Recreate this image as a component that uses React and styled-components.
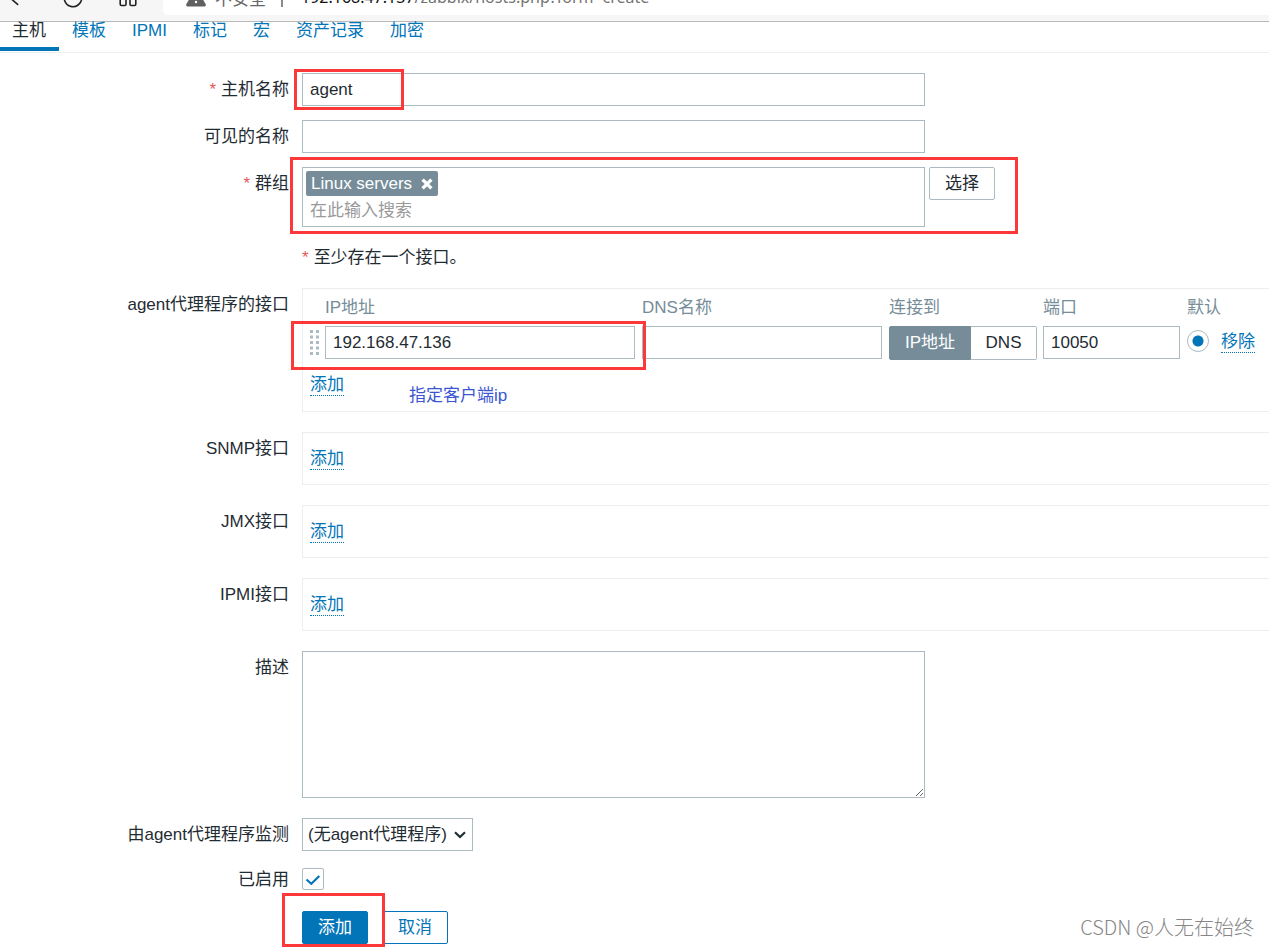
import React, { useState } from 'react';
import styled, { createGlobalStyle } from 'styled-components';

const TABS = ['主机', '模板', 'IPMI', '标记', '宏', '资产记录', '加密'];

const EMPTY_INTERFACES = ['SNMP接口', 'JMX接口', 'IPMI接口'];

function BrowserBar() {
  return (
    <Browser>
      <BrowserButtons>
        <BrowserIcon viewBox="0 0 22 20">
          <path d="M13.2 16.8 5.2 10l8-6.8" />
        </BrowserIcon>
        <BrowserIcon viewBox="0 0 22 20">
          <path d="M18 4.8A8.7 8.7 0 1 0 19.7 10M19 .6v5h-5" />
        </BrowserIcon>
        <BrowserIcon viewBox="0 0 22 20">
          <rect x="1.2" y="10.5" width="5.8" height="7" rx="1.2" />
          <rect x="11" y="10.5" width="5.8" height="7" rx="1.2" />
          <rect x="1.2" y="1" width="5.8" height="6" rx="1.2" />
          <rect x="11" y="1" width="5.8" height="6" rx="1.2" />
        </BrowserIcon>
      </BrowserButtons>
      <AddressBar>
        <WarningIcon viewBox="0 0 20 20">
          <path d="M8.7 2.5a1.5 1.5 0 0 1 2.6 0l8.4 14.8a1.5 1.5 0 0 1-1.3 2.2H1.6a1.5 1.5 0 0 1-1.3-2.2z" />
          <circle cx="10" cy="15" r="1.2" />
        </WarningIcon>
        <Insecure>不安全</Insecure>
        <Separator />
        <Url>
          <b>192.168.47.137</b>/zabbix/hosts.php?form=create
        </Url>
      </AddressBar>
    </Browser>
  );
}

function InterfaceTable() {
  const [target, setTarget] = useState('ip');
  return (
    <Table>
      <thead>
        <tr>
          <HeadCell />
          <HeadCell>IP地址</HeadCell>
          <HeadCell>DNS名称</HeadCell>
          <HeadCell>连接到</HeadCell>
          <HeadCell>端口</HeadCell>
          <HeadCell>默认</HeadCell>
          <HeadCell />
        </tr>
      </thead>
      <tbody>
        <tr>
          <Cell $width={22}>
            <DragHandle viewBox="0 0 9 25">
              {[0, 5.5, 11, 16.5, 22].map(y => (
                <path key={y} d={`M0 ${y}h3v3h-3zM6 ${y}h3v3h-3z`} />
              ))}
            </DragHandle>
          </Cell>
          <Cell $width={317} $space={7}>
            <Input aria-label="IP地址" defaultValue="192.168.47.136" />
          </Cell>
          <Cell $width={247} $space={7}>
            <Input aria-label="DNS名称" />
          </Cell>
          <Cell $width={154} $space={6}>
            <Segments>
              <Segment
                type="button"
                $active={target === 'ip'}
                onClick={() => setTarget('ip')}
              >
                IP地址
              </Segment>
              <Segment
                type="button"
                $active={target === 'dns'}
                onClick={() => setTarget('dns')}
              >
                DNS
              </Segment>
            </Segments>
          </Cell>
          <Cell $width={144} $space={7}>
            <Input aria-label="端口" defaultValue="10050" />
          </Cell>
          <Cell $width={34} $space={12}>
            <Radio type="radio" name="default" aria-label="默认" defaultChecked />
          </Cell>
          <Cell $width={34}>
            <ActionLink href="#remove">移除</ActionLink>
          </Cell>
        </tr>
      </tbody>
    </Table>
  );
}

function App() {
  return (
    <Page>
      <GlobalStyle />
      <BrowserBar />
      <Tabs>
        {TABS.map((tab, i) => (
          <Tab key={tab} href={`#tab${i}`} $active={i === 0}>
            {tab}
          </Tab>
        ))}
      </Tabs>
      <Form onSubmit={e => e.preventDefault()}>
        <Row>
          <Label htmlFor="host" $required>主机名称</Label>
          <Field>
            <Input id="host" defaultValue="agent" />
            <Highlight $left={-8} $top={-4} $width={110} $height={41} />
          </Field>
        </Row>
        <Row>
          <Label htmlFor="visible-name">可见的名称</Label>
          <Field>
            <Input id="visible-name" />
          </Field>
        </Row>
        <Row>
          <Label htmlFor="groups" $required>群组</Label>
          <GroupField>
            <MultiSelect>
              <Tag>
                Linux servers
                <TagRemove type="button" aria-label="删除">
                  <svg width="12" height="12" viewBox="0 0 12 12">
                    <path d="M1.6 1.6l8.8 8.8M10.4 1.6l-8.8 8.8" />
                  </svg>
                </TagRemove>
              </Tag>
              <SearchInput id="groups" placeholder="在此输入搜索" />
            </MultiSelect>
            <Button type="button" $kind="grey">选择</Button>
            <Highlight $left={-12} $top={-10} $width={728} $height={77} />
          </GroupField>
        </Row>
        <Row>
          <Label as="span" />
          <Note>至少存在一个接口。</Note>
        </Row>
        <Row $gap={20}>
          <Label as="span">agent代理程序的接口</Label>
          <Frame>
            <InterfaceTable />
            <FrameFooter>
              <ActionLink href="#add-agent">添加</ActionLink>
            </FrameFooter>
            <Highlight $left={-12} $top={32} $width={355} $height={49} />
            <HandNote>指定客户端ip</HandNote>
          </Frame>
        </Row>
        {EMPTY_INTERFACES.map(name => (
          <Row key={name} $gap={20}>
            <Label as="span">{name}</Label>
            <EmptyFrame>
              <ActionLink href={`#add-${name}`}>添加</ActionLink>
            </EmptyFrame>
          </Row>
        ))}
        <Row $gap={20}>
          <Label htmlFor="description">描述</Label>
          <Field>
            <TextArea id="description" />
          </Field>
        </Row>
        <Row $gap={12}>
          <Label htmlFor="proxy">由agent代理程序监测</Label>
          <SelectBox>
            <Select id="proxy">
              <option>(无agent代理程序)</option>
            </Select>
            <Chevron viewBox="0 0 12 8">
              <path d="M1 1.3l5 4.7 5-4.7" />
            </Chevron>
          </SelectBox>
        </Row>
        <Row $gap={15}>
          <Label htmlFor="enabled">已启用</Label>
          <CheckBox>
            <input id="enabled" type="checkbox" defaultChecked />
            <svg width="22" height="22" viewBox="0 0 22 22">
              <path d="M4.5 11.5l4.8 4.3 8-7.8" />
            </svg>
          </CheckBox>
        </Row>
        <Row $gap={0}>
          <Label as="span" />
          <Buttons>
            <Button type="submit" $kind="primary">添加</Button>
            <Button type="button" $kind="outline">取消</Button>
            <Highlight $left={-20} $top={-18} $width={103} $height={54} />
          </Buttons>
        </Row>
      </Form>
      <Watermark>CSDN @人无在始终</Watermark>
    </Page>
  );
}

const GlobalStyle = createGlobalStyle`
  *,
  *::before,
  *::after {
    box-sizing: border-box;
  }

  body {
    margin: 0;
    background: #fff;
  }

  body,
  input,
  button,
  select,
  textarea {
    color: #1f2c33;
    font-family: 'Liberation Sans', 'Noto Sans CJK SC', sans-serif;
    font-size: 17px;
  }
`;

const Page = styled.div`
  position: relative;
  min-height: 100vh;
  overflow: hidden;
`;

const Browser = styled.div`
  display: flex;
  align-items: flex-end;
  height: 22px;
  overflow: hidden;
  background: #f6f6f6;
  border-bottom: 1px solid #b9b9b9;
`;

const BrowserButtons = styled.div`
  display: flex;
  flex: none;
  align-items: center;
  gap: 35px;
  height: 34px;
  margin-bottom: 6px;
  padding: 0 22px 0 5px;
`;

const BrowserIcon = styled.svg`
  width: 22px;
  height: 20px;
  fill: none;
  stroke: #222;
  stroke-width: 1.6;
`;

const AddressBar = styled.div`
  display: flex;
  flex: 1;
  align-items: center;
  height: 36px;
  margin-bottom: 6px;
  padding-left: 23px;
  background: #fff;
  border-radius: 5px 0 0 5px;
  white-space: nowrap;
`;

const WarningIcon = styled.svg`
  width: 20px;
  height: 20px;
  fill: #606060;

  circle {
    fill: #fff;
  }
`;

const Insecure = styled.span`
  margin-left: 9px;
  color: #666;
`;

const Separator = styled.span`
  width: 2px;
  height: 20px;
  margin: 0 18px 0 15px;
  background: #8a8a8a;
`;

const Url = styled.span`
  color: #737373;
  font-family: 'Noto Sans', sans-serif;
  font-size: 16px;

  b {
    color: #111;
    font-weight: 400;
  }
`;

const Tabs = styled.nav`
  display: flex;
  height: 31px;
  border-bottom: 1px solid #ebeef0;
`;

const Tab = styled.a`
  height: 29px;
  padding: 0 13px;
  border-bottom: 4px solid ${props => (props.$active ? '#0275b8' : 'transparent')};
  color: ${props => (props.$active ? '#1f2c33' : '#0275b8')};
  line-height: 18px;
  text-decoration: none;

  &:first-child {
    padding-left: 12px;
  }
`;

const Form = styled.form`
  padding-top: 20px;
`;

const Row = styled.div`
  display: grid;
  grid-template-columns: 289px minmax(0, 1fr);
  column-gap: 13px;
  align-items: start;
  margin-bottom: ${props => (props.$gap === undefined ? 14 : props.$gap)}px;
`;

const Label = styled.label`
  line-height: 33px;
  text-align: right;

  &::before {
    content: ${props => (props.$required ? "'*'" : 'none')};
    margin-right: 5px;
    color: #e45959;
  }
`;

const Field = styled.div`
  position: relative;
  display: flex;
  max-width: 623px;
`;

const GroupField = styled.div`
  position: relative;
  display: flex;
  align-items: flex-start;
  gap: 4px;
  max-width: 693px;
`;

const Input = styled.input`
  display: block;
  width: 100%;
  height: 33px;
  padding: 0 7px;
  background: #fff;
  border: 1px solid #acbbc2;
  outline: none;
`;

const MultiSelect = styled.div`
  flex: 1;
  height: 60px;
  padding: 3px;
  border: 1px solid #acbbc2;
`;

const Tag = styled.span`
  display: flex;
  align-items: center;
  gap: 9px;
  width: max-content;
  height: 25px;
  padding: 0 5px;
  background: #768d99;
  border-radius: 2px;
  color: #fff;
`;

const TagRemove = styled.button`
  display: flex;
  padding: 0;
  background: none;
  border: 0;

  svg {
    fill: none;
    stroke: #fff;
    stroke-width: 3.4;
  }
`;

const SearchInput = styled.input`
  display: block;
  width: 100%;
  height: 30px;
  padding: 0 4px;
  background: none;
  border: 0;
  outline: none;

  &::placeholder {
    color: #999;
  }
`;

const buttonKinds = {
  grey: { border: '#acbbc2', background: '#fff', color: '#1f2c33' },
  primary: { border: '#0275b8', background: '#0275b8', color: '#fff' },
  outline: { border: '#0275b8', background: '#fff', color: '#0275b8' },
};

const Button = styled.button`
  flex: none;
  height: 33px;
  padding: 0 15px;
  background: ${props => buttonKinds[props.$kind].background};
  border: 1px solid ${props => buttonKinds[props.$kind].border};
  border-radius: 2px;
  color: ${props => buttonKinds[props.$kind].color};
  line-height: 20px;
`;

const Buttons = styled.div`
  position: relative;
  display: flex;
  gap: 14px;
`;

const Note = styled.div`
  line-height: 33px;

  &::before {
    content: '*';
    margin-right: 5px;
    color: #e45959;
  }
`;

const Frame = styled.div`
  position: relative;
  border: 1px solid #ebeef0;
  border-right: 0;
`;

const FrameFooter = styled.div`
  display: flex;
  padding: 14px 7px 15px;
`;

const EmptyFrame = styled.div`
  display: flex;
  padding: 15px 7px 14px;
  border: 1px solid #ebeef0;
  border-right: 0;
`;

const Table = styled.table`
  border-collapse: collapse;
`;

const HeadCell = styled.th`
  height: 37px;
  padding: 0;
  color: #768d99;
  font-weight: 400;
  line-height: 20px;
  text-align: left;
`;

const Cell = styled.td`
  width: ${props => props.$width}px;
  min-width: ${props => props.$width}px;
  height: 34px;
  padding: 0 ${props => props.$space || 0}px 0 0;
  vertical-align: top;
`;

const DragHandle = styled.svg`
  display: block;
  width: 9px;
  height: 25px;
  margin: 4px 0 0 7px;
  fill: #acbbc2;
`;

const Segments = styled.div`
  display: flex;
`;

const Segment = styled.button`
  height: 34px;
  padding: 0 15px;
  background: ${props => (props.$active ? '#768d99' : '#fff')};
  border: 1px solid ${props => (props.$active ? '#768d99' : '#acbbc2')};
  color: ${props => (props.$active ? '#fff' : '#1f2c33')};
  line-height: 20px;
  white-space: nowrap;

  &:first-child {
    flex: none;
    border-radius: 2px 0 0 2px;
  }

  &:last-child {
    flex: 1;
    padding: 0;
    border-left: 0;
    border-radius: 0 2px 2px 0;
  }
`;

const Radio = styled.input`
  display: block;
  width: 22px;
  height: 22px;
  margin: 4px 0 0;
  appearance: none;
  border: 1px solid #acbbc2;
  border-radius: 50%;

  &:checked {
    background: radial-gradient(circle, #0275b8 5px, transparent 6px);
  }
`;

const ActionLink = styled.a`
  display: inline-block;
  height: 22px;
  border-bottom: 1px dotted #0275b8;
  color: #0275b8;
  line-height: 21px;
  text-decoration: none;

  ${Cell} & {
    margin-top: 5px;
  }
`;

const TextArea = styled.textarea`
  display: block;
  width: 100%;
  height: 147px;
  padding: 4px 7px;
  border: 1px solid #acbbc2;
  outline: none;
`;

const SelectBox = styled.div`
  position: relative;
  width: max-content;
`;

const Select = styled.select`
  display: block;
  height: 33px;
  padding: 0 25px 0 5px;
  appearance: none;
  background: #fff;
  border: 1px solid #acbbc2;
  border-radius: 0;
`;

const Chevron = styled.svg`
  position: absolute;
  top: 13px;
  right: 7px;
  width: 12px;
  height: 8px;
  fill: none;
  stroke: #1f2c33;
  stroke-width: 2.2;
  pointer-events: none;
`;

const CheckBox = styled.span`
  display: grid;
  width: 22px;
  height: 22px;
  margin-top: 5px;

  input,
  svg {
    grid-area: 1 / 1;
  }

  input {
    width: 22px;
    height: 22px;
    margin: 0;
    appearance: none;
    border: 1px solid #acbbc2;
    border-radius: 2px;
  }

  svg {
    fill: none;
    stroke: #0275b8;
    stroke-width: 2.2;
    pointer-events: none;
    visibility: hidden;
  }

  input:checked + svg {
    visibility: visible;
  }
`;

const Highlight = styled.div`
  position: absolute;
  top: ${props => props.$top}px;
  left: ${props => props.$left}px;
  width: ${props => props.$width}px;
  height: ${props => props.$height}px;
  border: 3px solid #fc3838;
  pointer-events: none;
`;

const HandNote = styled.span`
  position: absolute;
  top: 96px;
  left: 106px;
  color: #3b56d3;
  line-height: 22px;
`;

const Watermark = styled.div`
  position: absolute;
  right: 15px;
  bottom: 8px;
  color: #868686;
  font-family: 'Noto Sans CJK SC', sans-serif;
  font-size: 20px;
  font-weight: 300;
  line-height: 24px;
`;

export default App;
